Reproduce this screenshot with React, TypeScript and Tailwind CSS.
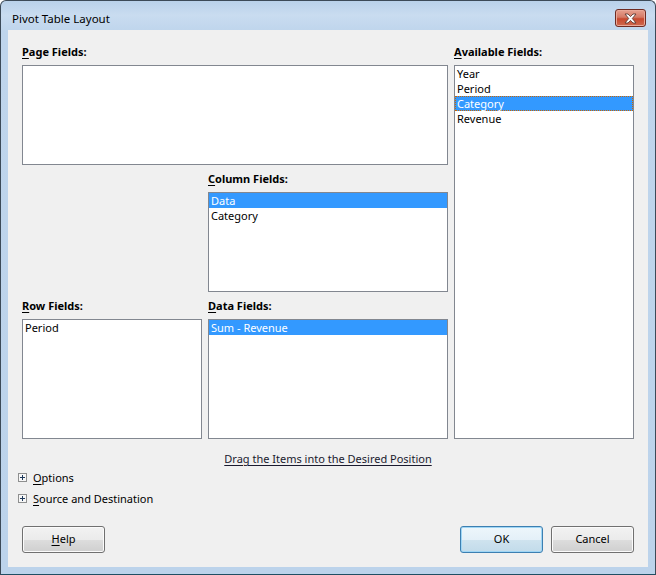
import React from "react";

const FONT = { fontFamily: '"Noto Sans", "Liberation Sans", sans-serif' };

function Label({ k, rest }: { k: string; rest: string }) {
  return (
    <div className="h-[15px] leading-[15px] mb-[6px] text-[11px] font-bold text-black">
      <span className="underline underline-offset-2">{k}</span>
      {rest}
    </div>
  );
}

function ListBox({
  items,
  selected,
  focused,
  height,
}: {
  items: string[];
  selected?: number;
  focused?: boolean;
  height: string;
}) {
  return (
    <div className={`border border-[#828790] bg-white ${height}`}>
      {items.map((it, i) => {
        const sel = i === selected;
        return (
          <div
            key={it}
            className={`h-[15px] text-[11px] ${sel ? "bg-[#3399ff] text-white" : "text-black"} ${
              sel && focused
                ? "border border-dotted border-[#cc6600] pl-[1px] leading-[13px]"
                : "pl-[2px] leading-[15px]"
            }`}
          >
            {it}
          </div>
        );
      })}
    </div>
  );
}

function Button({ children, primary }: { children: React.ReactNode; primary?: boolean }) {
  return (
    <div
      className={`w-[83px] h-[27px] rounded-[3px] border flex items-center justify-center text-[11px] text-black ${
        primary
          ? "border-[#3c7fb1] shadow-[inset_0_0_0_1px_#9fd6f5] bg-[linear-gradient(#edf6fb_0%,#e4f0f8_50%,#cfe3ef_51%,#c2dbea_100%)]"
          : "border-[#707070] shadow-[inset_0_0_0_1px_#fbfbfb] bg-[linear-gradient(#f2f2f2_0%,#ebebeb_50%,#dddddd_51%,#cfcfcf_100%)]"
      }`}
    >
      {children}
    </div>
  );
}

function PlusBox() {
  return (
    <svg width="9" height="9" viewBox="0 0 9 9" className="shrink-0">
      <rect x="0.5" y="0.5" width="8" height="8" fill="#f7f7f7" stroke="#8e8f8f" />
      <path d="M2 4.5H7M4.5 2V7" stroke="#1e395b" strokeWidth="1" />
    </svg>
  );
}

export default function App() {
  return (
    <div
      style={FONT}
      className="w-[656px] h-[575px] border border-[#3c4a58] border-b-[#1f4f63] rounded-t-[6px] bg-[linear-gradient(#b9d1ea_0px,#c9dcf0_14px,#bfd5ec_30px,#bcd3eb_100%)] flex flex-col"
    >
      {/* title bar */}
      <div className="h-[29px] flex items-start justify-between pl-[11px] pr-[9px]">
        <div className="mt-[10px] text-[11.5px] leading-[15px] text-black">Pivot Table Layout</div>
        <div className="mt-[8px] w-[31px] h-[18px] rounded-[3px] border border-[#6e2b22] shadow-[inset_0_0_0_1px_#e9a898] bg-[linear-gradient(#e6a08f_0%,#d57a66_45%,#c7482e_55%,#cf6a4f_100%)] flex items-center justify-center">
          <svg width="13" height="11" viewBox="0 0 13 11">
            <path
              d="M1 1H4L6.5 3.6L9 1H12L8.3 5.5L12 10H9L6.5 7.4L4 10H1L4.7 5.5Z"
              fill="#ffffff"
              stroke="#5b3a34"
              strokeWidth="0.9"
              strokeLinejoin="round"
            />
          </svg>
        </div>
      </div>

      {/* client area */}
      <div className="mx-[7px] mb-[7px] flex-1 bg-[#f0f0f0] px-[14px] pt-[14px] flex flex-col">
        <div className="flex gap-[6px]">
          <div className="w-[426px] flex flex-col">
            <Label k="P" rest="age Fields:" />
            <ListBox items={[]} height="h-[100px]" />
            <div className="mt-[6px] flex gap-[6px]">
              <div className="w-[180px] flex flex-col">
                <div className="h-[121px]" />
                <div className="mt-[6px]">
                  <Label k="R" rest="ow Fields:" />
                  <ListBox items={["Period"]} height="h-[120px]" />
                </div>
              </div>
              <div className="w-[240px] flex flex-col">
                <Label k="C" rest="olumn Fields:" />
                <ListBox items={["Data", "Category"]} selected={0} height="h-[100px]" />
                <div className="mt-[6px]">
                  <Label k="D" rest="ata Fields:" />
                  <ListBox items={["Sum - Revenue"]} selected={0} height="h-[120px]" />
                </div>
              </div>
            </div>
          </div>
          <div className="w-[180px] flex flex-col">
            <Label k="A" rest="vailable Fields:" />
            <ListBox
              items={["Year", "Period", "Category", "Revenue"]}
              selected={2}
              focused
              height="h-[374px]"
            />
          </div>
        </div>

        <div className="w-[426px] flex justify-end mt-[12px]">
          <div className="w-[240px] text-center text-[11px] leading-[15px] text-[#1a1a2e] underline underline-offset-2">
            Drag the Items into the Desired Position
          </div>
        </div>

        <div className="-ml-[4px] mt-[4px] flex items-center gap-[6px] h-[15px] text-[11px] leading-[15px] text-black">
          <PlusBox />
          <span>
            <span className="underline underline-offset-2">O</span>ptions
          </span>
        </div>
        <div className="-ml-[4px] mt-[6px] flex items-center gap-[6px] h-[15px] text-[11px] leading-[15px] text-black">
          <PlusBox />
          <span>
            <span className="underline underline-offset-2">S</span>ource and Destination
          </span>
        </div>

        <div className="mt-[20px] flex items-center">
          <Button>
            <span>
              <span className="underline underline-offset-2">H</span>elp
            </span>
          </Button>
          <div className="flex-1" />
          <div className="flex gap-[8px]">
            <Button primary>OK</Button>
            <Button>Cancel</Button>
          </div>
        </div>
      </div>
    </div>
  );
}
